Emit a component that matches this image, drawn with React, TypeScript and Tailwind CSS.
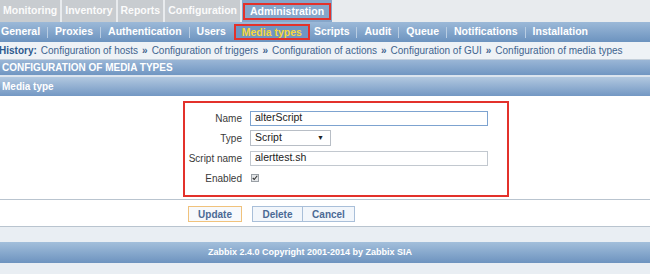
import { Fragment } from "react";

const TOP_TABS = ["Monitoring", "Inventory", "Reports", "Configuration"];

const SUB_ITEMS = [
  "General",
  "Proxies",
  "Authentication",
  "Users",
  "Media types",
  "Scripts",
  "Audit",
  "Queue",
  "Notifications",
  "Installation",
];

const HISTORY = [
  "Configuration of hosts",
  "Configuration of triggers",
  "Configuration of actions",
  "Configuration of GUI",
  "Configuration of media types",
];

const font = "font-['Liberation_Sans',Arial,sans-serif]";

function TopMenu() {
  return (
    <div className="flex h-[22px] gap-[2px] bg-[#e8ebee]">
      {TOP_TABS.map((tab) => (
        <div
          key={tab}
          className="flex items-center bg-[#c8ccd0] px-[3px] text-[10.5px] font-bold text-[#fbfbfb]"
        >
          {tab}
        </div>
      ))}
      <div className="flex items-center bg-[#86a6ca] px-[1px] pt-[1px]">
        <span className="border-2 border-[#e3312b] px-[5px] text-[10.5px] leading-[13px] font-bold text-white">
          Administration
        </span>
      </div>
    </div>
  );
}

function SubMenu() {
  return (
    <div className="flex h-[20px] items-center bg-linear-to-b from-[#9cb9d8] to-[#6c93bf] pl-[1px]">
      {SUB_ITEMS.map((item, i) => {
        const active = item === "Media types";
        const next = SUB_ITEMS[i + 1];
        const sep = i < SUB_ITEMS.length - 1 && !active && next !== "Media types";
        return (
          <Fragment key={item}>
            {active ? (
              <span className="ml-[3px] mr-[4px] border-2 border-[#e3312b] bg-[#6f96c2] px-[6px] text-[10.5px] leading-[12px] font-bold text-[#f5d63f]">
                {item}
              </span>
            ) : (
              <span className="text-[10.5px] font-bold text-white">{item}</span>
            )}
            {sep && <span className="mx-[7px] h-[11px] w-px bg-[#b9cde2]" />}
            {!sep && !active && i < SUB_ITEMS.length - 1 && <span className="w-[5px]" />}
          </Fragment>
        );
      })}
    </div>
  );
}

function History() {
  return (
    <div className="flex h-[18px] items-center border-b border-[#c3cfdb] bg-[#eef2f6] text-[10px] text-[#41648f]">
      <span className="-ml-[1px] mr-[4px] font-bold text-[#2d5a8e]">History:</span>
      {HISTORY.map((h, i) => (
        <Fragment key={h}>
          <span>{h}</span>
          {i < HISTORY.length - 1 && <span className="mx-[4px] font-bold">»</span>}
        </Fragment>
      ))}
    </div>
  );
}

function Field({ label, children }: { label: string; children: React.ReactNode }) {
  return (
    <>
      <div className="flex h-[20px] items-center justify-end text-[10px] text-[#3a3a3a]">
        {label}
      </div>
      <div className="flex h-[20px] items-center">{children}</div>
    </>
  );
}

function MediaForm() {
  return (
    <div className="h-[104px] border-b border-[#b9c4cf] bg-white pl-[183px] pt-[5px]">
      <div className="h-[96px] w-[326px] border-2 border-[#e3312b] pt-[5px]">
        <div className="grid grid-cols-[57px_238px] gap-x-[8px]">
          <Field label="Name">
            <div className="flex h-[15px] w-[238px] items-center border border-[#7da3d0] pl-[4px] text-[10.5px] text-[#222]">
              alterScript
            </div>
          </Field>
          <Field label="Type">
            <div className="flex h-[16px] w-[81px] items-center justify-between border border-[#b8bec6] bg-white pl-[4px] pr-[6px] text-[10.5px] text-[#222]">
              <span>Script</span>
              <span className="text-[7px]">▼</span>
            </div>
          </Field>
          <Field label="Script name">
            <div className="flex h-[15px] w-[238px] items-center border border-[#c2c8cf] pl-[4px] text-[10.5px] text-[#222]">
              alerttest.sh
            </div>
          </Field>
          <Field label="Enabled">
            <span className="ml-[1px] flex h-[8px] w-[8px] items-center justify-center border border-[#9aa0a6] bg-[#e4e6e8]">
              <svg viewBox="0 0 8 8" className="h-[6px] w-[6px]">
                <path d="M1 4 L3 6 L7 1" stroke="#333" strokeWidth="1.5" fill="none" />
              </svg>
            </span>
          </Field>
        </div>
      </div>
    </div>
  );
}

function Buttons() {
  return (
    <div className="flex h-[27px] items-start border-b border-[#b9c4cf] bg-white pl-[188px] pt-[6px] text-[10px] font-bold text-[#4b6a95]">
      <span className="flex h-[16px] w-[54px] items-center justify-center border border-[#f0c27c] bg-[#f7f9fc]">
        Update
      </span>
      <span className="ml-[10px] flex h-[16px] w-[51px] items-center justify-center border border-[#a9bfd9] bg-[#f2f6fb]">
        Delete
      </span>
      <span className="flex h-[16px] w-[52px] items-center justify-center border border-l-0 border-[#a9bfd9] bg-[#f2f6fb]">
        Cancel
      </span>
    </div>
  );
}

export default function App() {
  return (
    <div className={`h-[274px] w-[650px] overflow-hidden bg-[#e9eef3] ${font}`}>
      <TopMenu />
      <SubMenu />
      <History />
      <div className="flex h-[15px] items-center bg-linear-to-b from-[#9ab6d6] to-[#7096c2] pl-[2px] text-[10px] font-bold text-white">
        CONFIGURATION OF MEDIA TYPES
      </div>
      <div className="h-[2px] bg-[#dbe4ee]" />
      <div className="flex h-[19px] items-center bg-linear-to-b from-[#b2c8e0] to-[#7398c3] pl-[2px] text-[10px] font-bold text-white">
        Media type
      </div>
      <MediaForm />
      <Buttons />
      <div className="h-[15px]" />
      <div className="flex h-[21px] items-center justify-center bg-linear-to-b from-[#a3bfdb] to-[#6d93bf] pr-[30px] text-[9px] font-bold text-white">
        Zabbix 2.4.0 Copyright 2001-2014 by Zabbix SIA
      </div>
    </div>
  );
}
